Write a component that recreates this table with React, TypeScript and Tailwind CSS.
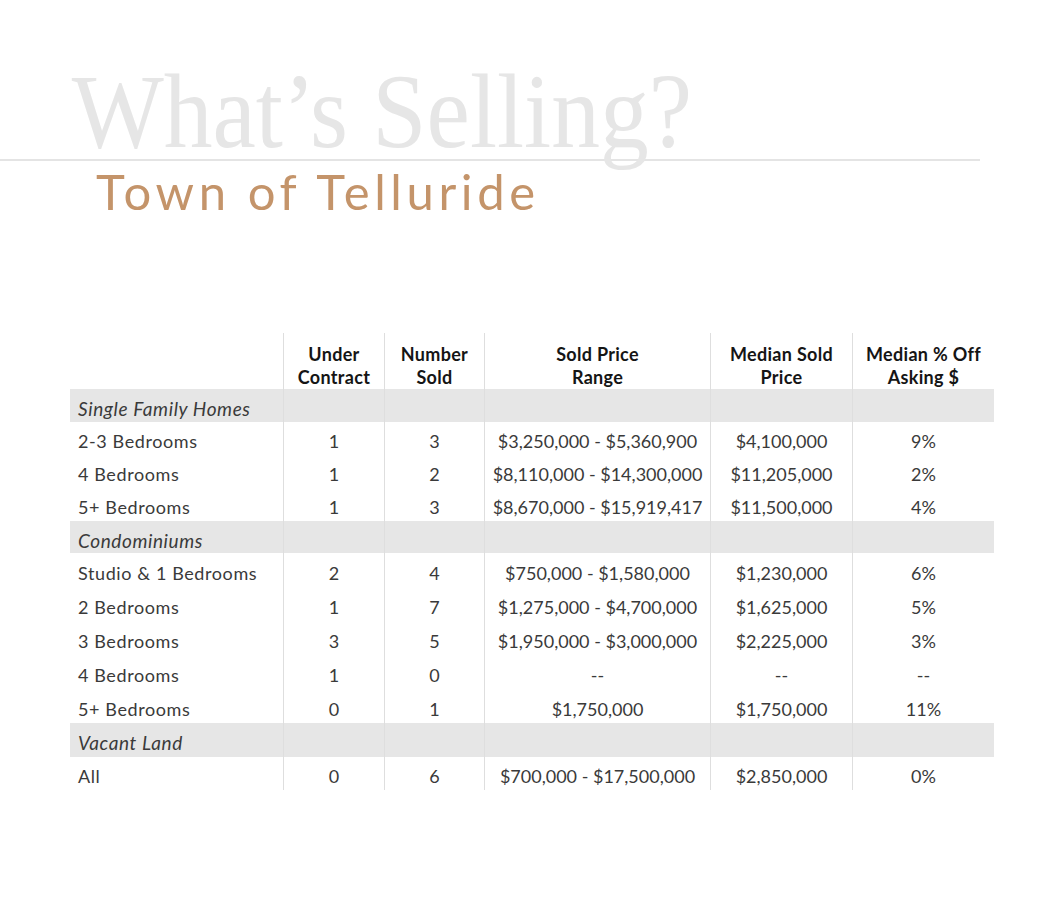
const SANS = "font-['Lato','Open_Sans',sans-serif]";

type Row = { label: string; uc: string; sold: string; range: string; median: string; off: string };

const SECTIONS: { title: string; rowH: string; bandH: string; rows: Row[] }[] = [
  {
    title: "Single Family Homes",
    bandH: "h-[33px]",
    rowH: "h-[33px]",
    rows: [
      { label: "2-3 Bedrooms", uc: "1", sold: "3", range: "$3,250,000 - $5,360,900", median: "$4,100,000", off: "9%" },
      { label: "4 Bedrooms", uc: "1", sold: "2", range: "$8,110,000 - $14,300,000", median: "$11,205,000", off: "2%" },
      { label: "5+ Bedrooms", uc: "1", sold: "3", range: "$8,670,000 - $15,919,417", median: "$11,500,000", off: "4%" },
    ],
  },
  {
    title: "Condominiums",
    bandH: "h-[32px]",
    rowH: "h-[34px]",
    rows: [
      { label: "Studio & 1 Bedrooms", uc: "2", sold: "4", range: "$750,000 - $1,580,000", median: "$1,230,000", off: "6%" },
      { label: "2 Bedrooms", uc: "1", sold: "7", range: "$1,275,000 - $4,700,000", median: "$1,625,000", off: "5%" },
      { label: "3 Bedrooms", uc: "3", sold: "5", range: "$1,950,000 - $3,000,000", median: "$2,225,000", off: "3%" },
      { label: "4 Bedrooms", uc: "1", sold: "0", range: "--", median: "--", off: "--" },
      { label: "5+ Bedrooms", uc: "0", sold: "1", range: "$1,750,000", median: "$1,750,000", off: "11%" },
    ],
  },
  {
    title: "Vacant Land",
    bandH: "h-[34px]",
    rowH: "h-[30px]",
    rows: [
      { label: "All", uc: "0", sold: "6", range: "$700,000 - $17,500,000", median: "$2,850,000", off: "0%" },
    ],
  },
];

const COLS = "grid grid-cols-[213px_101px_100px_226px_142px_142px]";
const CELL = "flex items-center justify-center border-l border-[#dedede] pt-[6px]";

function Band({ title, h }: { title: string; h: string }) {
  return (
    <div className={`${COLS} ${h} bg-[#e6e6e6]`}>
      <div className="flex items-center pt-[6px] pl-2 text-[19px] tracking-[0.6px] italic">{title}</div>
      <div className={CELL} />
      <div className={CELL} />
      <div className={CELL} />
      <div className={CELL} />
      <div className={CELL} />
    </div>
  );
}

function DataRow({ row, h }: { row: Row; h: string }) {
  return (
    <div className={`${COLS} ${h}`}>
      <div className="flex items-center pt-[6px] pl-2 tracking-[0.6px]">{row.label}</div>
      <div className={CELL}>{row.uc}</div>
      <div className={CELL}>{row.sold}</div>
      <div className={CELL}>{row.range}</div>
      <div className={CELL}>{row.median}</div>
      <div className={CELL}>{row.off}</div>
    </div>
  );
}

export default function App() {
  return (
    <div className="min-h-[901px] w-[1051px] bg-white">
      <div className="pt-[59px]">
        <h1 className="h-[100px] origin-left scale-x-[0.92] pl-[78px] font-['Liberation_Serif','Times_New_Roman',serif] text-[106px] leading-none font-normal whitespace-nowrap text-[#e6e6e6]">
          What’s Selling?
        </h1>
        <div className="h-[2px] w-[980px] bg-[#e4e4e4]" />
        <div
          className={`mt-[6px] pl-[96px] ${SANS} text-[49px] leading-none font-normal tracking-[4.6px] text-[#c4946a]`}
        >
          Town of Telluride
        </div>
      </div>

      <div className={`mt-[117px] ml-[70px] w-[924px] ${SANS} text-[18px] text-[#3a3a3a]`}>
        <div className={`${COLS} h-[56px] font-bold leading-[23px] tracking-[0.3px] text-[#151515]`}>
          <div />
          <div className="flex items-end justify-center border-l border-[#dedede] text-center">
            Under
            <br />
            Contract
          </div>
          <div className="flex items-end justify-center border-l border-[#dedede] text-center">
            Number
            <br />
            Sold
          </div>
          <div className="flex items-end justify-center border-l border-[#dedede] text-center">
            Sold Price
            <br />
            Range
          </div>
          <div className="flex items-end justify-center border-l border-[#dedede] text-center">
            Median Sold
            <br />
            Price
          </div>
          <div className="flex items-end justify-center border-l border-[#dedede] text-center">
            Median % Off
            <br />
            Asking $
          </div>
        </div>
        {SECTIONS.map((s) => (
          <div key={s.title}>
            <Band title={s.title} h={s.bandH} />
            {s.rows.map((r) => (
              <DataRow key={r.label} row={r} h={s.rowH} />
            ))}
          </div>
        ))}
      </div>
    </div>
  );
}
